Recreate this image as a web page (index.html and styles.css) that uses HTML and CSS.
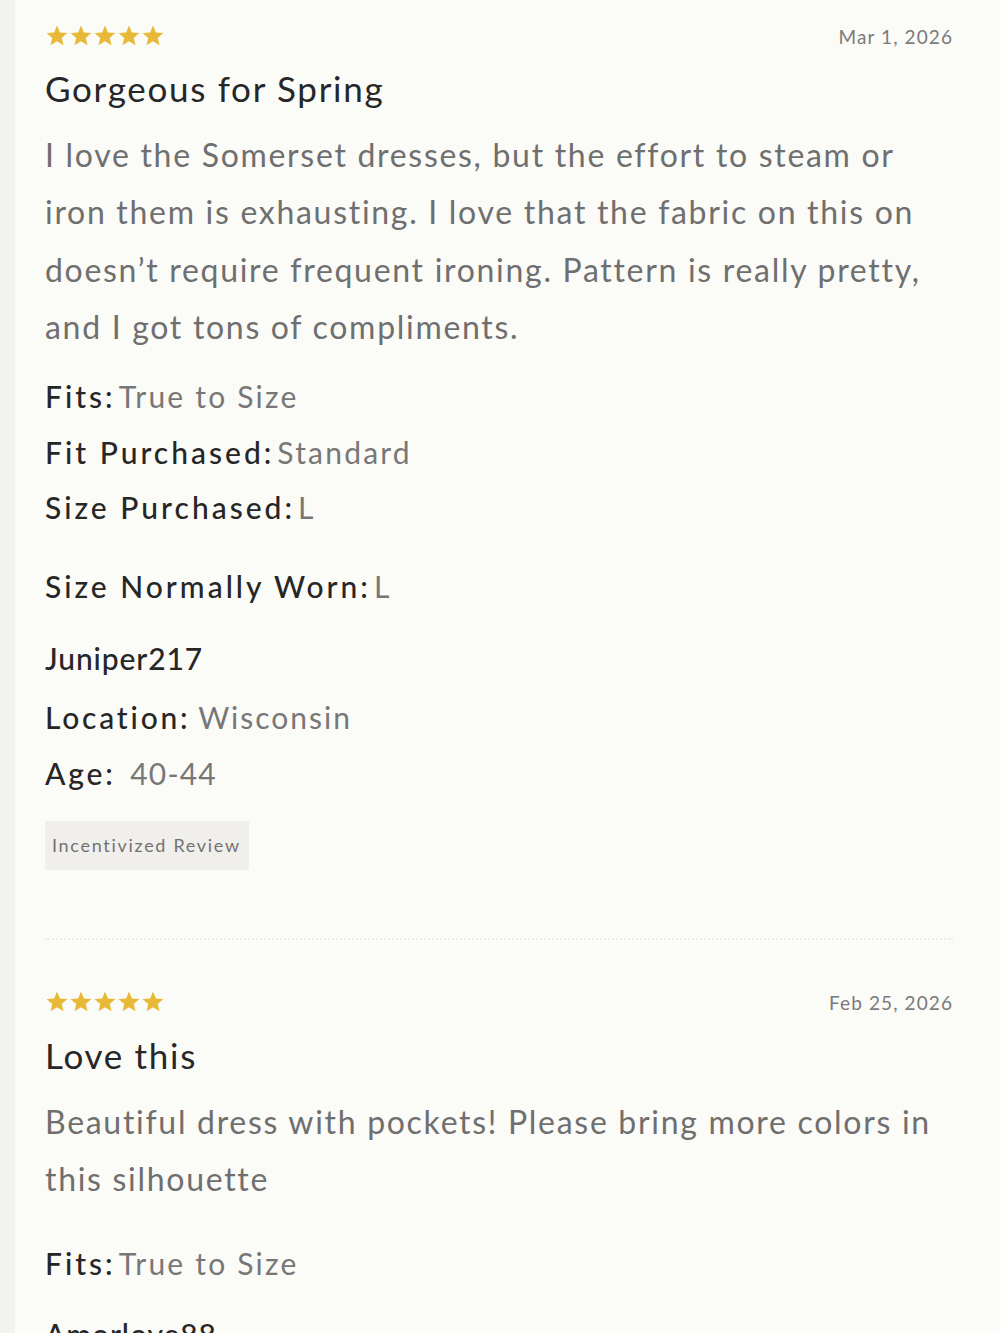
FILE: index.html
```html
<!DOCTYPE html>
<html lang="en">
<head>
<meta charset="utf-8">
<title>Reviews</title>
<link rel="stylesheet" href="styles.css">
</head>
<body>
<div class="page">
  <article class="review">
    <div class="review-head">
      <div class="stars" aria-label="5 stars">
        <svg viewBox="0 0 24 24"><polygon points="12,1.5 14.9,8.4 22.4,9 16.7,13.9 18.5,21.2 12,17.3 5.5,21.2 7.3,13.9 1.6,9 9.1,8.4"/></svg>
        <svg viewBox="0 0 24 24"><polygon points="12,1.5 14.9,8.4 22.4,9 16.7,13.9 18.5,21.2 12,17.3 5.5,21.2 7.3,13.9 1.6,9 9.1,8.4"/></svg>
        <svg viewBox="0 0 24 24"><polygon points="12,1.5 14.9,8.4 22.4,9 16.7,13.9 18.5,21.2 12,17.3 5.5,21.2 7.3,13.9 1.6,9 9.1,8.4"/></svg>
        <svg viewBox="0 0 24 24"><polygon points="12,1.5 14.9,8.4 22.4,9 16.7,13.9 18.5,21.2 12,17.3 5.5,21.2 7.3,13.9 1.6,9 9.1,8.4"/></svg>
        <svg viewBox="0 0 24 24"><polygon points="12,1.5 14.9,8.4 22.4,9 16.7,13.9 18.5,21.2 12,17.3 5.5,21.2 7.3,13.9 1.6,9 9.1,8.4"/></svg>
      </div>
      <div class="date">Mar 1, 2026</div>
    </div>
    <h2 class="title">Gorgeous for Spring</h2>
    <p class="body">I love the Somerset dresses, but the effort to steam or iron them is exhausting. I love that the fabric on this on doesn’t require frequent ironing. Pattern is really pretty, and I got tons of compliments.</p>
    <div class="fits">
      <div class="row"><span class="label">Fits:</span><span class="value">True to Size</span></div>
      <div class="row"><span class="label">Fit Purchased:</span><span class="value">Standard</span></div>
      <div class="row"><span class="label">Size Purchased:</span><span class="value">L</span></div>
      <div class="row row-gap"><span class="label">Size Normally Worn:</span><span class="value">L</span></div>
    </div>
    <div class="author">
      <div class="name">Juniper217</div>
      <div class="meta"><span class="meta-label">Location:</span> <span class="meta-value">Wisconsin</span></div>
      <div class="meta"><span class="meta-label">Age:</span> <span class="meta-value age">40-44</span></div>
    </div>
    <div class="badge">Incentivized Review</div>
  </article>
  <hr class="divider">
  <article class="review review-2">
    <div class="review-head">
      <div class="stars" aria-label="5 stars">
        <svg viewBox="0 0 24 24"><polygon points="12,1.5 14.9,8.4 22.4,9 16.7,13.9 18.5,21.2 12,17.3 5.5,21.2 7.3,13.9 1.6,9 9.1,8.4"/></svg>
        <svg viewBox="0 0 24 24"><polygon points="12,1.5 14.9,8.4 22.4,9 16.7,13.9 18.5,21.2 12,17.3 5.5,21.2 7.3,13.9 1.6,9 9.1,8.4"/></svg>
        <svg viewBox="0 0 24 24"><polygon points="12,1.5 14.9,8.4 22.4,9 16.7,13.9 18.5,21.2 12,17.3 5.5,21.2 7.3,13.9 1.6,9 9.1,8.4"/></svg>
        <svg viewBox="0 0 24 24"><polygon points="12,1.5 14.9,8.4 22.4,9 16.7,13.9 18.5,21.2 12,17.3 5.5,21.2 7.3,13.9 1.6,9 9.1,8.4"/></svg>
        <svg viewBox="0 0 24 24"><polygon points="12,1.5 14.9,8.4 22.4,9 16.7,13.9 18.5,21.2 12,17.3 5.5,21.2 7.3,13.9 1.6,9 9.1,8.4"/></svg>
      </div>
      <div class="date">Feb 25, 2026</div>
    </div>
    <h2 class="title title-2">Love this</h2>
    <p class="body">Beautiful dress with pockets! Please bring more colors in this silhouette</p>
    <div class="fits fits-2">
      <div class="row"><span class="label">Fits:</span><span class="value">True to Size</span></div>
    </div>
    <div class="author author-2">
      <div class="name">Amorlove88</div>
    </div>
  </article>
</div>
</body>
</html>
```

FILE: styles.css
```css
html, body {
  margin: 0;
  padding: 0;
}
body {
  background: #f2f2ef;
  font-family: "Lato", "Noto Sans", sans-serif;
  color: #2a2a2a;
  height: 1333px;
  overflow: hidden;
}
.page {
  margin-left: 15px;
  background: #fbfbf8;
  padding: 24px 47px 0 30px;
  min-height: 1333px;
  box-sizing: border-box;
}
.review-head {
  display: flex;
  justify-content: space-between;
  align-items: center;
  height: 24px;
}
.stars {
  display: flex;
  height: 24px;
}
.stars svg {
  width: 24px;
  height: 24px;
  fill: #e7b936;
}
.date {
  font-size: 19px;
  color: #7a7a7a;
  letter-spacing: 1.1px;
}
.title {
  margin: 18px 0 0;
  font-size: 35px;
  font-weight: 400;
  line-height: 44px;
  letter-spacing: 1.7px;
  color: #272727;
}
.title-2 {
  margin-top: 19px;
}
.body {
  margin: 16px 0 0;
  font-size: 32px;
  line-height: 57.3px;
  color: #6f6f6f;
  letter-spacing: 1.7px;
}
.fits {
  margin-top: 14px;
}
.row, .meta, .name {
  font-size: 30px;
  line-height: 55.5px;
}
.row-gap {
  margin-top: 23.5px;
}
.label {
  color: #262626;
  font-weight: 500;
  letter-spacing: 3px;
  margin-right: 3px;
}
.value {
  color: #777;
  letter-spacing: 2.2px;
}
.meta-label {
  color: #262626;
  font-weight: 500;
  letter-spacing: 2.8px;
}
.meta-value {
  color: #777;
  letter-spacing: 2px;
}
.age {
  margin-left: 7px;
  letter-spacing: 1.2px;
}
.author {
  margin-top: 16px;
}
.name {
  color: #262626;
  font-weight: 500;
  letter-spacing: 0.9px;
  margin-bottom: 4px;
}
.badge {
  display: inline-block;
  margin-top: 20px;
  background: #f0efec;
  color: #727272;
  font-size: 18px;
  letter-spacing: 1.7px;
  height: 49px;
  line-height: 49px;
  padding: 0 8px 0 7px;
}
.divider {
  border: 0;
  border-top: 2px dotted #ecece9;
  margin: 68px 0 0;
  height: 0;
}
.review-2 {
  padding-top: 50px;
}
.fits-2 {
  margin-top: 28px;
}
.author-2 {
  margin-top: 16px;
}
```
